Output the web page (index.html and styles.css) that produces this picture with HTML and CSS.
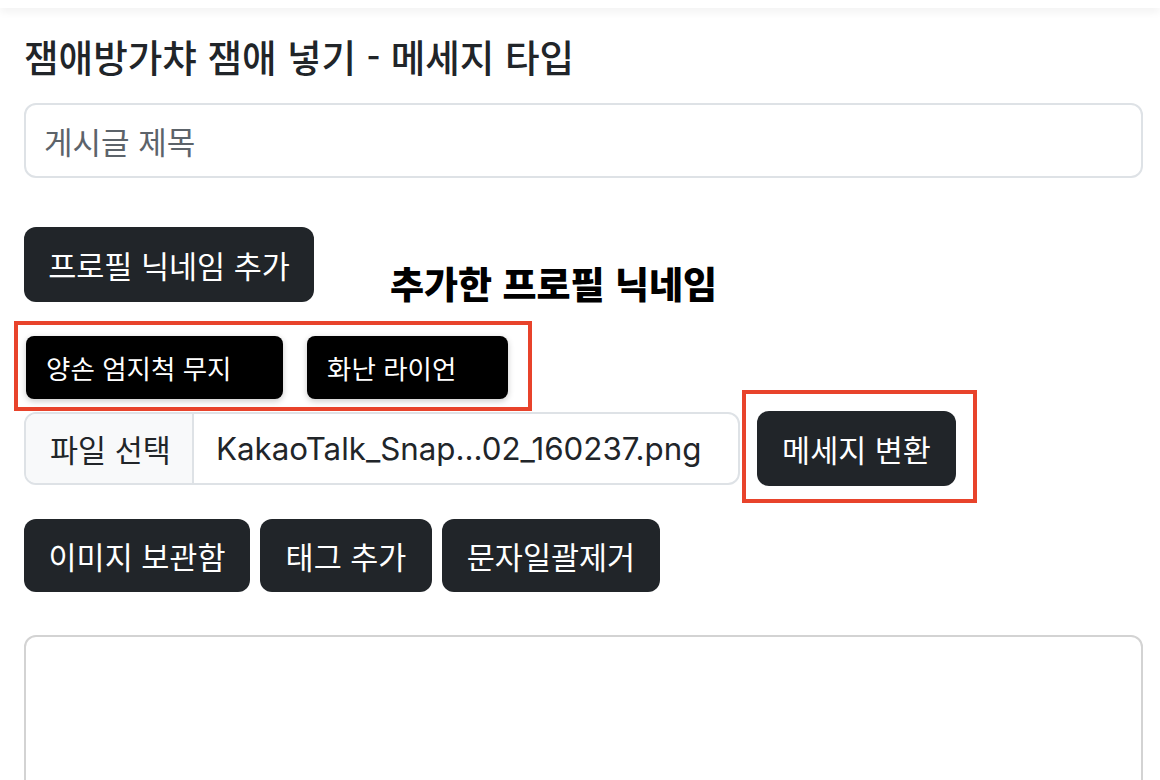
FILE: index.html
```html
<!DOCTYPE html>
<html lang="ko">
<head>
<meta charset="utf-8">
<title>잼애방가챠 잼애 넣기 - 메세지 타입</title>
<link rel="stylesheet" href="styles.css">
</head>
<body>
<header class="topbar"></header>
<main class="page">
  <h1 class="title">잼애방가챠 잼애 넣기 - 메세지 타입</h1>
  <input class="text-input" type="text" placeholder="게시글 제목">

  <div class="profile-row">
    <button class="btn btn-profile">프로필 닉네임 추가</button>
    <h2 class="added-heading">추가한 프로필 닉네임</h2>
  </div>

  <div class="chip-box">
    <span class="chip chip-wide">양손 엄지척 무지</span>
    <span class="chip chip-narrow">화난 라이언</span>
  </div>

  <div class="file-row">
    <div class="file-input">
      <span class="file-label">파일 선택</span>
      <span class="file-name">KakaoTalk_Snap...02_160237.png</span>
    </div>
    <button class="btn btn-marked">메세지 변환</button>
  </div>

  <div class="action-row">
    <button class="btn btn-w1">이미지 보관함</button>
    <button class="btn btn-w2">태그 추가</button>
    <button class="btn btn-w3">문자일괄제거</button>
  </div>

  <textarea class="message-area"></textarea>
</main>
</body>
</html>
```

FILE: styles.css
```css
* { box-sizing: border-box; }

html, body {
  margin: 0;
  background: #fff;
  overflow: hidden;
}

body {
  font-family: "Inter", "Noto Sans CJK KR", sans-serif;
  color: #212529;
}

.topbar {
  height: 8px;
  background: #fff;
  box-shadow: 0 3px 10px rgba(0, 0, 0, 0.07);
  position: relative;
  z-index: 1;
}

.page {
  padding: 0 17px 0 24px;
}

.title {
  margin: 0;
  padding-top: 23px;
  font-family: "Noto Sans CJK KR", sans-serif;
  font-size: 37.6px;
  font-weight: 500;
  line-height: 50px;
  color: #212529;
}

.text-input {
  display: block;
  width: 100%;
  height: 75px;
  margin-top: 22px;
  padding: 0 18px;
  border: 2px solid #dee2e6;
  border-radius: 12px;
  font-family: "Noto Sans CJK KR", sans-serif;
  font-size: 31px;
  color: #212529;
  background: #fff;
  outline: none;
}

.text-input::placeholder {
  color: #5c636a;
}

.btn {
  height: 75px;
  padding: 0 25px;
  border: 0;
  border-radius: 12px;
  background: #212529;
  color: #fff;
  font-family: "Noto Sans CJK KR", sans-serif;
  font-size: 30.5px;
  font-weight: 400;
  white-space: nowrap;
  cursor: pointer;
}

.btn-profile {
  width: 290px;
  padding: 0;
}

.profile-row {
  display: flex;
  align-items: flex-start;
  margin-top: 49px;
}

.added-heading {
  margin: 34px 0 0 76px;
  font-family: "Noto Sans CJK KR", sans-serif;
  font-size: 37px;
  font-weight: 900;
  line-height: 44px;
  color: #000;
}

.chip-box {
  display: flex;
  gap: 24px;
  width: 518px;
  margin: 16px 0 0 -10px;
  padding: 11px 8px 8px 8px;
  border: 4px solid #e8432b;
}

.chip {
  display: flex;
  align-items: center;
  height: 63px;
  padding-left: 20px;
  background: #000;
  color: #fff;
  border-radius: 8px;
  font-family: "Noto Sans CJK KR", sans-serif;
  font-size: 26.5px;
  box-shadow: 0 2px 6px rgba(0, 0, 0, 0.22);
}

.chip-wide { width: 257px; }
.chip-narrow { width: 201px; }

.file-row {
  display: flex;
  align-items: center;
  gap: 17px;
  margin-top: 0;
}

.file-input {
  display: flex;
  width: 716px;
  height: 73px;
  border: 2px solid #dee2e6;
  border-radius: 12px;
  overflow: hidden;
  font-size: 30.5px;
}

.file-label {
  display: flex;
  align-items: center;
  width: 168px;
  padding-left: 24px;
  background: #f8f9fa;
  border-right: 2px solid #dee2e6;
  font-family: "Noto Sans CJK KR", sans-serif;
}

.file-name {
  display: flex;
  align-items: center;
  padding-left: 22px;
  font-family: "Inter", sans-serif;
  font-size: 31.3px;
}

.btn-marked {
  position: relative;
  width: 199px;
  padding: 0;
}

.btn-marked::after {
  content: "";
  position: absolute;
  top: -21px;
  right: -21px;
  bottom: -17px;
  left: -15px;
  border: 4px solid #e8432b;
  pointer-events: none;
}

.action-row {
  display: flex;
  gap: 10px;
  margin-top: 33px;
}

.btn-w1 { width: 226px; padding: 0; height: 73px; }
.btn-w2 { width: 172px; padding: 0; height: 73px; }
.btn-w3 { width: 218px; padding: 0; height: 73px; }

.message-area {
  display: block;
  width: 100%;
  height: 300px;
  margin-top: 43px;
  border: 2px solid #d3d3d3;
  border-radius: 12px;
  resize: none;
  outline: none;
}
```
